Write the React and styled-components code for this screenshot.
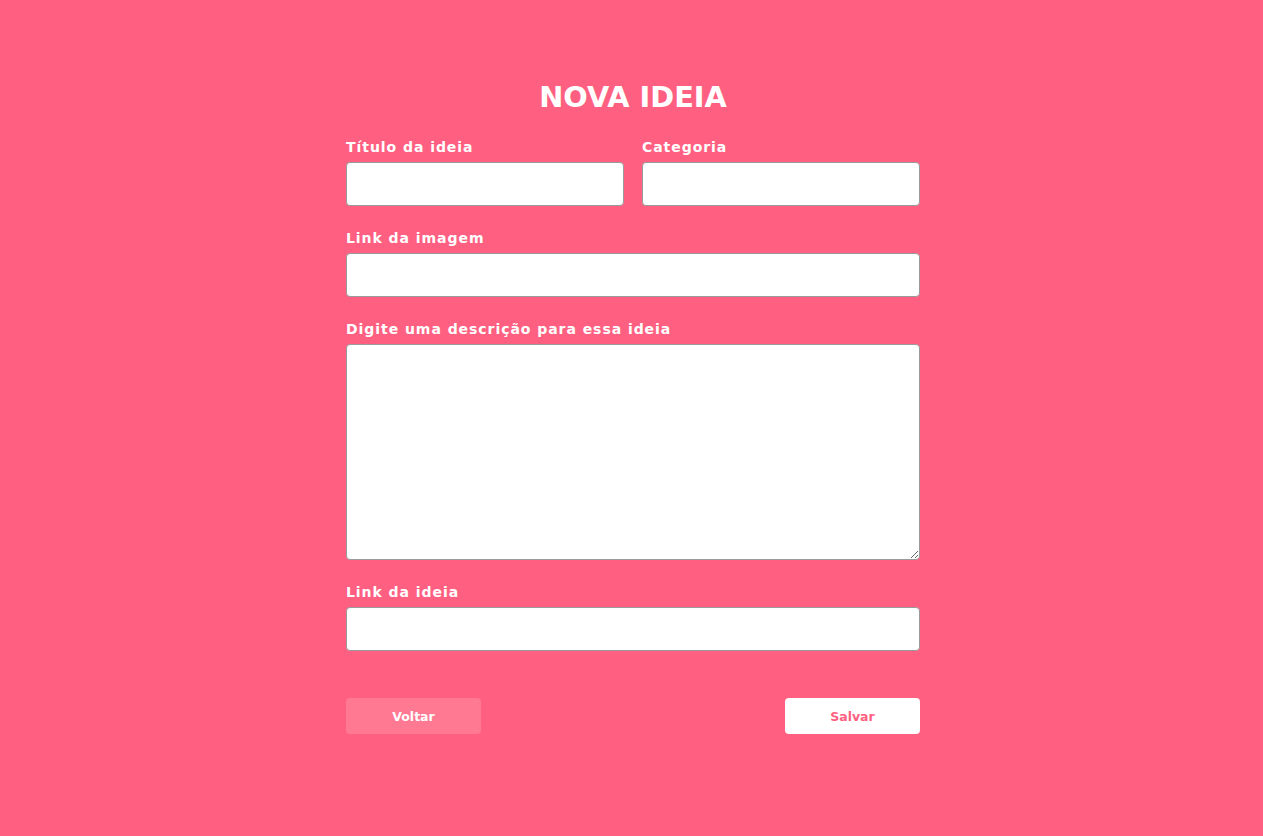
import React from "react";
import styled, { createGlobalStyle } from "styled-components";

const Global = createGlobalStyle`
  html, body { margin: 0; padding: 0; background: #ff5f81; }
  body { font-family: "DejaVu Sans", sans-serif; min-height: 836px; }
  * { box-sizing: border-box; }
`;

const Page = styled.main`
  width: 577px;
  margin: 0 auto;
  padding: 81px 0 0 3px;
`;

const Title = styled.h1`
  margin: 0 0 25px;
  text-align: center;
  color: #fff;
  font-family: "DejaVu Sans", sans-serif;
  font-weight: 700;
  font-size: 28.8px;
  line-height: 33px;
`;

const Form = styled.form`
  display: flex;
  flex-direction: column;
  gap: 24px;
`;

const Row = styled.div`
  display: grid;
  grid-template-columns: 1fr 1fr;
  gap: 18px;
`;

const Field = styled.label`
  display: flex;
  flex-direction: column;
  gap: 7px;
`;

const LabelText = styled.span`
  color: #fff;
  font-family: "DejaVu Sans", sans-serif;
  font-weight: 700;
  font-size: 14px;
  line-height: 16px;
  letter-spacing: 0.95px;
`;

const Input = styled.input`
  height: 44px;
  width: 100%;
  border: 1px solid #9a9a9a;
  border-radius: 4px;
  background: #fff;
  padding: 0 10px;
  font-size: 14px;
  outline: none;
`;

const TextArea = styled.textarea`
  height: 216px;
  width: 100%;
  border: 1px solid #9a9a9a;
  border-radius: 4px;
  background: #fff;
  padding: 8px 10px;
  font-size: 14px;
  outline: none;
  display: block;
`;

const Actions = styled.div`
  display: flex;
  justify-content: space-between;
  margin-top: 23px;
`;

const Button = styled.button`
  width: 135px;
  height: 36px;
  border: none;
  border-radius: 4px;
  font-family: "DejaVu Sans", sans-serif;
  font-weight: 700;
  font-size: 12.5px;
  cursor: pointer;
  background: ${(p) => (p.$primary ? "#fff" : "#ff7993")};
  color: ${(p) => (p.$primary ? "#ff5f81" : "#fff")};
`;

export default function App() {
  return (
    <>
      <Global />
      <Page>
        <Title>NOVA IDEIA</Title>
        <Form onSubmit={(e) => e.preventDefault()}>
          <Row>
            <Field>
              <LabelText>Título da ideia</LabelText>
              <Input type="text" />
            </Field>
            <Field>
              <LabelText>Categoria</LabelText>
              <Input type="text" />
            </Field>
          </Row>
          <Field>
            <LabelText>Link da imagem</LabelText>
            <Input type="text" />
          </Field>
          <Field>
            <LabelText>Digite uma descrição para essa ideia</LabelText>
            <TextArea />
          </Field>
          <Field>
            <LabelText>Link da ideia</LabelText>
            <Input type="text" />
          </Field>
          <Actions>
            <Button type="button">Voltar</Button>
            <Button type="submit" $primary>Salvar</Button>
          </Actions>
        </Form>
      </Page>
    </>
  );
}
